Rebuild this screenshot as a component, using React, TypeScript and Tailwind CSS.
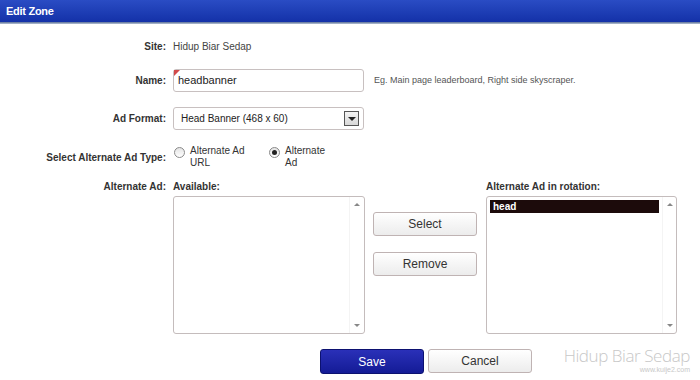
import React from 'react';

const font = { fontFamily: '"Liberation Sans", Arial, sans-serif' };

function Radio({ checked }: { checked?: boolean }) {
  return (
    <span className="mt-[2px] flex h-[11px] w-[11px] shrink-0 items-center justify-center rounded-full border border-[#8a8a8a] bg-gradient-to-b from-[#e4e4e4] to-white">
      {checked && <span className="h-[5px] w-[5px] rounded-full bg-[#222]" />}
    </span>
  );
}

function ListBox({ children }: { children?: React.ReactNode }) {
  return (
    <div className="flex h-[138px] rounded-[3px] border border-[#c4bcbc] bg-white">
      <div className="flex-1 p-[3px]">{children}</div>
      <div className="flex w-[15px] flex-col items-center justify-between py-[6px] border-l border-[#f4f4f4]">
        <span className="h-0 w-0 border-x-[3px] border-b-[3px] border-x-transparent border-b-[#888]" />
        <span className="h-0 w-0 border-x-[3px] border-t-[3px] border-x-transparent border-t-[#888]" />
      </div>
    </div>
  );
}

function Btn({ children }: { children: React.ReactNode }) {
  return (
    <button className="h-[24px] w-[104px] rounded-[3px] border border-[#bfb3b3] bg-gradient-to-b from-white to-[#ececec] text-[12px] text-[#333]">
      {children}
    </button>
  );
}

export default function App() {
  return (
    <div className="relative h-[380px] w-[700px] overflow-hidden bg-white" style={font}>
      <header className="flex h-[22px] items-center bg-gradient-to-b from-[#2a4cc4] to-[#1431a8] pl-[6px] text-[11px] font-bold tracking-tight text-white">
        Edit Zone
      </header>
      <div className="h-[2px] bg-gradient-to-b from-[#5c6f95] to-[#b8c4d6]" />

      <div className="text-[10px] text-[#333]">
        <div className="mt-[11px] grid h-[23px] grid-cols-[166px_1fr] items-center gap-x-[7px]">
          <span className="text-right font-bold">Site:</span>
          <span className="text-[#444]">Hidup Biar Sedap</span>
        </div>

        <div className="mt-[11px] grid h-[23px] grid-cols-[166px_1fr] items-center gap-x-[7px]">
          <span className="text-right font-bold">Name:</span>
          <div className="flex items-center gap-[10px]">
            <div className="relative flex h-[23px] w-[191px] items-center rounded-[3px] border border-[#c8c0c0] bg-white pl-[4px] text-[11px] text-[#222]">
              <span className="absolute left-0 top-0 h-0 w-0 border-r-[6px] border-t-[6px] border-r-transparent border-t-[#d24a4a]" />
              headbanner
            </div>
            <span className="text-[9px] text-[#555]">Eg. Main page leaderboard, Right side skyscraper.</span>
          </div>
        </div>

        <div className="mt-[15px] grid h-[23px] grid-cols-[166px_1fr] items-center gap-x-[7px]">
          <span className="text-right font-bold">Ad Format:</span>
          <div className="flex h-[23px] w-[191px] items-center justify-between rounded-[3px] border border-[#c8c0c0] bg-white pl-[7px] pr-[4px] text-[#222]">
            <span>Head Banner (468 x 60)</span>
            <span className="flex h-[15px] w-[15px] items-center justify-center border border-[#555] bg-gradient-to-b from-[#f4f4f4] to-[#d8d8d8]">
              <span className="h-0 w-0 border-x-[4px] border-t-[4px] border-x-transparent border-t-[#222]" />
            </span>
          </div>
        </div>

        <div className="mt-[15px] grid h-[23px] grid-cols-[166px_1fr] items-center gap-x-[7px]">
          <span className="text-right font-bold">Select Alternate Ad Type:</span>
          <div className="flex items-start">
            <div className="flex w-[96px] items-start gap-[5px] pl-[1px] leading-[12px]">
              <Radio />
              <span>Alternate Ad<br />URL</span>
            </div>
            <div className="flex items-start gap-[5px] leading-[12px]">
              <Radio checked />
              <span>Alternate<br />Ad</span>
            </div>
          </div>
        </div>

        <div className="mt-[13px] grid grid-cols-[166px_1fr] gap-x-[7px]">
          <span className="text-right font-bold leading-[12px]">Alternate Ad:</span>
          <div className="flex items-start">
            <div className="w-[192px]">
              <div className="h-[15px] font-bold leading-[12px]">Available:</div>
              <ListBox />
            </div>
            <div className="ml-[8px] mt-[31px] flex flex-col gap-[16px]">
              <Btn>Select</Btn>
              <Btn>Remove</Btn>
            </div>
            <div className="ml-[9px] w-[191px]">
              <div className="h-[15px] font-bold leading-[12px]">Alternate Ad in rotation:</div>
              <ListBox>
                <div className="h-[13px] w-[169px] bg-[#1c0b0b] pl-[3px] text-[10px] font-bold leading-[13px] text-white">head</div>
              </ListBox>
            </div>
          </div>
        </div>

        <div className="mt-[15px] flex gap-[4px] pl-[320px]">
          <button className="h-[25px] w-[104px] rounded-[3px] border border-[#0c1170] bg-gradient-to-b from-[#2a30b8] to-[#141b96] text-[12px] text-white">
            Save
          </button>
          <Btn>Cancel</Btn>
        </div>
      </div>

      <div className="absolute bottom-[6px] right-[10px] flex flex-col items-end text-[#c8c8c8]">
        <span className="text-[17px] font-light leading-[18px] tracking-tight" style={{ fontFamily: '"Open Sans", sans-serif' }}>Hidup Biar Sedap</span>
        <span className="text-[7px] leading-[9px]">www.kuije2.com</span>
      </div>
    </div>
  );
}
